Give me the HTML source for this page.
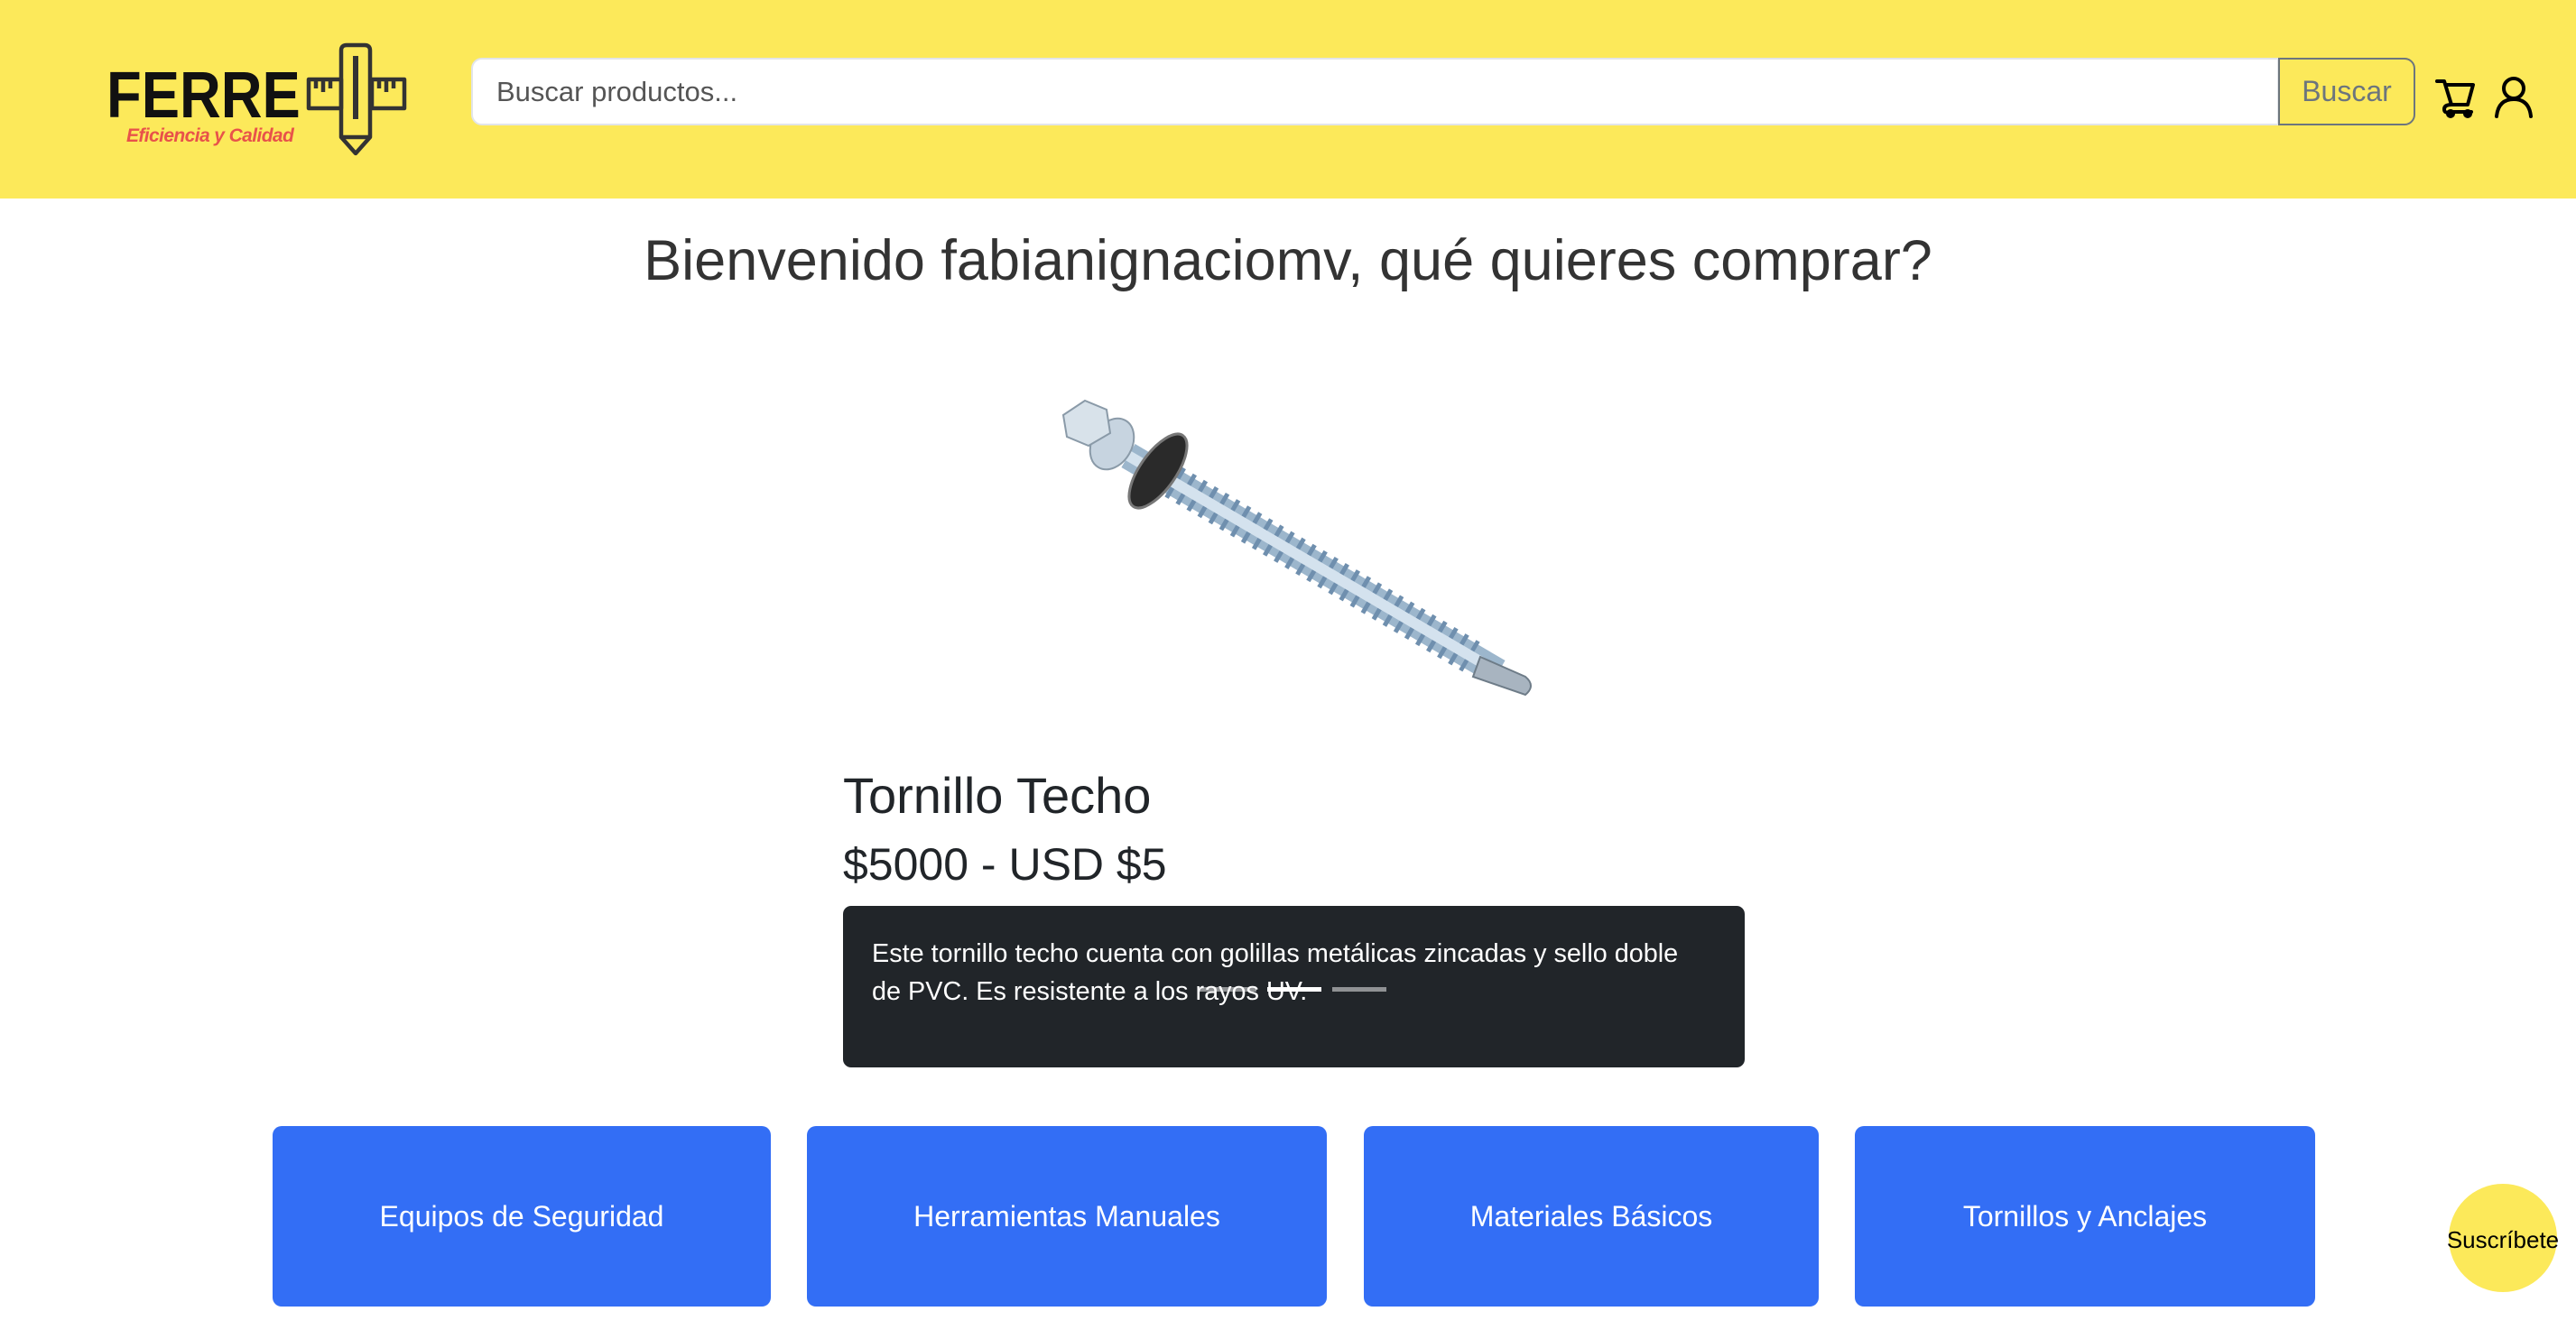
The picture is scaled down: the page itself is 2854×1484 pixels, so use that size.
<!DOCTYPE html>
<html><head><meta charset="utf-8"><style>
*{box-sizing:border-box;margin:0;padding:0}
body{width:2854px;height:1484px;background:#fff;font-family:"Liberation Sans",Arial,sans-serif;position:relative;overflow:hidden;color:#212529}
.hdr{position:absolute;left:0;top:0;width:2854px;height:220px;background:#fce95a}
.abs{position:absolute}
.search{left:522px;top:64px;width:2003px;height:75px;background:#fff;border:2px solid #e2e5e9;border-radius:12px 0 0 12px;font-size:31px;color:#555;padding:0 0 0 26px;line-height:71px}
.btn{left:2524px;top:64px;width:152px;height:75px;border:2px solid #6c757d;border-radius:0 12px 12px 0;color:#6c757d;font-size:32px;line-height:71px;text-align:center}
h1{position:absolute;left:0;width:2854px;top:251px;text-align:center;font-size:63px;font-weight:400;color:#333;line-height:76px}
.cat{position:absolute;top:1248px;height:200px;background:#336ef5;border-radius:10px;color:#fff;font-size:32px;display:flex;align-items:center;justify-content:center}
</style></head><body>
<div class="hdr"></div>
<div class="abs" style="left:118px;top:70px;font-size:72px;font-weight:700;color:#111;line-height:72px;transform:scaleX(0.88);transform-origin:0 0">FERRE</div>
<div class="abs" style="left:140px;top:139px;font-size:21px;font-weight:700;font-style:italic;color:#e8524a;letter-spacing:-0.6px">Eficiencia y Calidad</div>
<svg class="abs" style="left:336px;top:46px" width="120" height="130" viewBox="336 46 120 130">
<g fill="none" stroke="#333" stroke-width="4.5" stroke-linejoin="round">
<rect x="342" y="88" width="36" height="32"/><rect x="412" y="88" width="36" height="32"/>
<path d="M350 90v8M358 90v12M366 90v8M420 90v8M428 90v12M436 90v8"/>
<path d="M378 56q0-6 6-6h20q6 0 6 6v96l-16 18-16-18z"/>
<path d="M394 62v70" stroke-width="6"/><path d="M378 152h32"/>
</g></svg>
<div class="abs search">Buscar productos...</div>
<div class="abs btn">Buscar</div>
<svg class="abs" style="left:2698px;top:84px" width="48" height="48" viewBox="0 0 48 48" fill="none" stroke="#000" stroke-width="4" stroke-linejoin="round" stroke-linecap="round">
<path d="M2 6h8l8 26h18l6-22H13"/><path d="M18 32q-8 0-8 5t6 3h24"/>
<circle cx="17" cy="42" r="3" fill="#000"/><circle cx="36" cy="42" r="3" fill="#000"/></svg>
<svg class="abs" style="left:2762px;top:84px" width="46" height="48" viewBox="0 0 46 48" fill="none" stroke="#000" stroke-width="4" stroke-linecap="round">
<circle cx="23" cy="14" r="11"/><path d="M4 45q2-19 19-19t19 19"/></svg>
<h1>Bienvenido fabianignaciomv, qué quieres comprar?</h1>
<svg class="abs" style="left:1160px;top:420px" width="560" height="370" viewBox="1160 420 560 370">
<line x1="1250" y1="505" x2="1660" y2="745" stroke="#9cb6cc" stroke-width="30"/>
<line x1="1300" y1="534" x2="1630" y2="728" stroke="#6f8fae" stroke-width="38" stroke-dasharray="5 9"/>
<line x1="1250" y1="505" x2="1660" y2="745" stroke="#d4e2ee" stroke-width="12"/>
<path d="M1640 728l50 22q12 10 0 20l-58-20z" fill="#a8b4c0" stroke="#6e7c88" stroke-width="2"/>
<ellipse cx="1283" cy="522" rx="20" ry="48" transform="rotate(35 1283 522)" fill="#2a2a2a" stroke="#777" stroke-width="3"/>
<ellipse cx="1232" cy="492" rx="22" ry="30" transform="rotate(30 1232 492)" fill="#c7d4e0" stroke="#8a9aa8" stroke-width="2"/>
<path d="M1178 460l24-16 24 10 4 26-24 14-24-10z" fill="#d8e2ea" stroke="#8a9aa8" stroke-width="2"/>
</svg>
<div class="abs" style="left:934px;top:849px;font-size:56px;line-height:66px;color:#212529">Tornillo Techo</div>
<div class="abs" style="left:934px;top:926px;font-size:50px;line-height:64px;color:#212529">$5000 - USD $5</div>
<div class="abs" style="left:934px;top:1004px;width:999px;height:179px;background:#212529;border-radius:9px"></div>
<div class="abs" style="left:966px;top:1036px;width:925px;font-size:28.8px;line-height:42px;color:#fff">Este tornillo techo cuenta con golillas metálicas zincadas y sello doble de PVC. Es resistente a los rayos UV.</div>
<div class="abs" style="left:1329px;top:1094px;width:63px;height:5px;background:#fff;opacity:.5"></div>
<div class="abs" style="left:1404px;top:1094px;width:60px;height:5px;background:#fff"></div>
<div class="abs" style="left:1476px;top:1094px;width:60px;height:5px;background:#fff;opacity:.5"></div>
<div class="cat" style="left:302px;width:552px">Equipos de Seguridad</div>
<div class="cat" style="left:894px;width:576px">Herramientas Manuales</div>
<div class="cat" style="left:1511px;width:504px">Materiales Básicos</div>
<div class="cat" style="left:2055px;width:510px">Tornillos y Anclajes</div>
<div class="abs" style="left:2713px;top:1312px;width:120px;height:120px;border-radius:50%;background:#fce95a"></div>
<div class="abs" style="left:2700px;top:1356px;width:146px;text-align:center;font-size:26px;line-height:36px;color:#000">Suscríbete</div>
</body></html>
